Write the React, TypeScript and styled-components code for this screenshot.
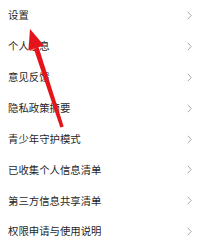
import React from 'react'
import styled, { createGlobalStyle } from 'styled-components'

const GlobalStyle = createGlobalStyle`
  html, body {
    margin: 0;
    padding: 0;
    background: #ffffff;
  }
  body {
    font-family: "Noto Sans CJK SC", "Noto Sans", sans-serif;
  }
`

const Page = styled.div`
  position: relative;
  width: 204px;
  height: 246px;
  overflow: hidden;
  background: #ffffff;
`

const List = styled.ul`
  list-style: none;
  margin: 0;
  padding: 0;
  display: flex;
  flex-direction: column;
`

const Row = styled.li`
  height: 30.9px;
  display: flex;
  align-items: center;
  justify-content: space-between;
  padding: 0 12px 0 8px;
`

const Label = styled.span`
  font-size: 10.4px;
  line-height: 1;
  color: #1f1f1f;
  letter-spacing: 0;
`

const Chevron = styled.svg`
  width: 5px;
  height: 9px;
  flex: none;
`

const ArrowLayer = styled.svg`
  position: absolute;
  left: 0;
  top: 0;
  width: 204px;
  height: 246px;
  pointer-events: none;
`

const items = [
  '设置',
  '个人信息',
  '意见反馈',
  '隐私政策摘要',
  '青少年守护模式',
  '已收集个人信息清单',
  '第三方信息共享清单',
  '权限申请与使用说明',
]

function App() {
  return (
    <>
      <GlobalStyle />
      <Page>
        <List>
          {items.map((item) => (
            <Row key={item}>
              <Label>{item}</Label>
              <Chevron viewBox="0 0 5 9">
                <polyline points="0.8,0.8 4.2,4.5 0.8,8.2" fill="none" stroke="#a8a8a8" strokeWidth="1" />
              </Chevron>
            </Row>
          ))}
        </List>
        {/* 빨간 화살표 */}
        <ArrowLayer viewBox="0 0 204 246">
          <polygon points="30,29 44,45.5 28.4,50.6" fill="#e5141b" />
          <polygon points="38.6,47.2 63.7,126.4 60.3,127.6 33.8,48.8" fill="#e5141b" />
        </ArrowLayer>
      </Page>
    </>
  )
}

export default App
